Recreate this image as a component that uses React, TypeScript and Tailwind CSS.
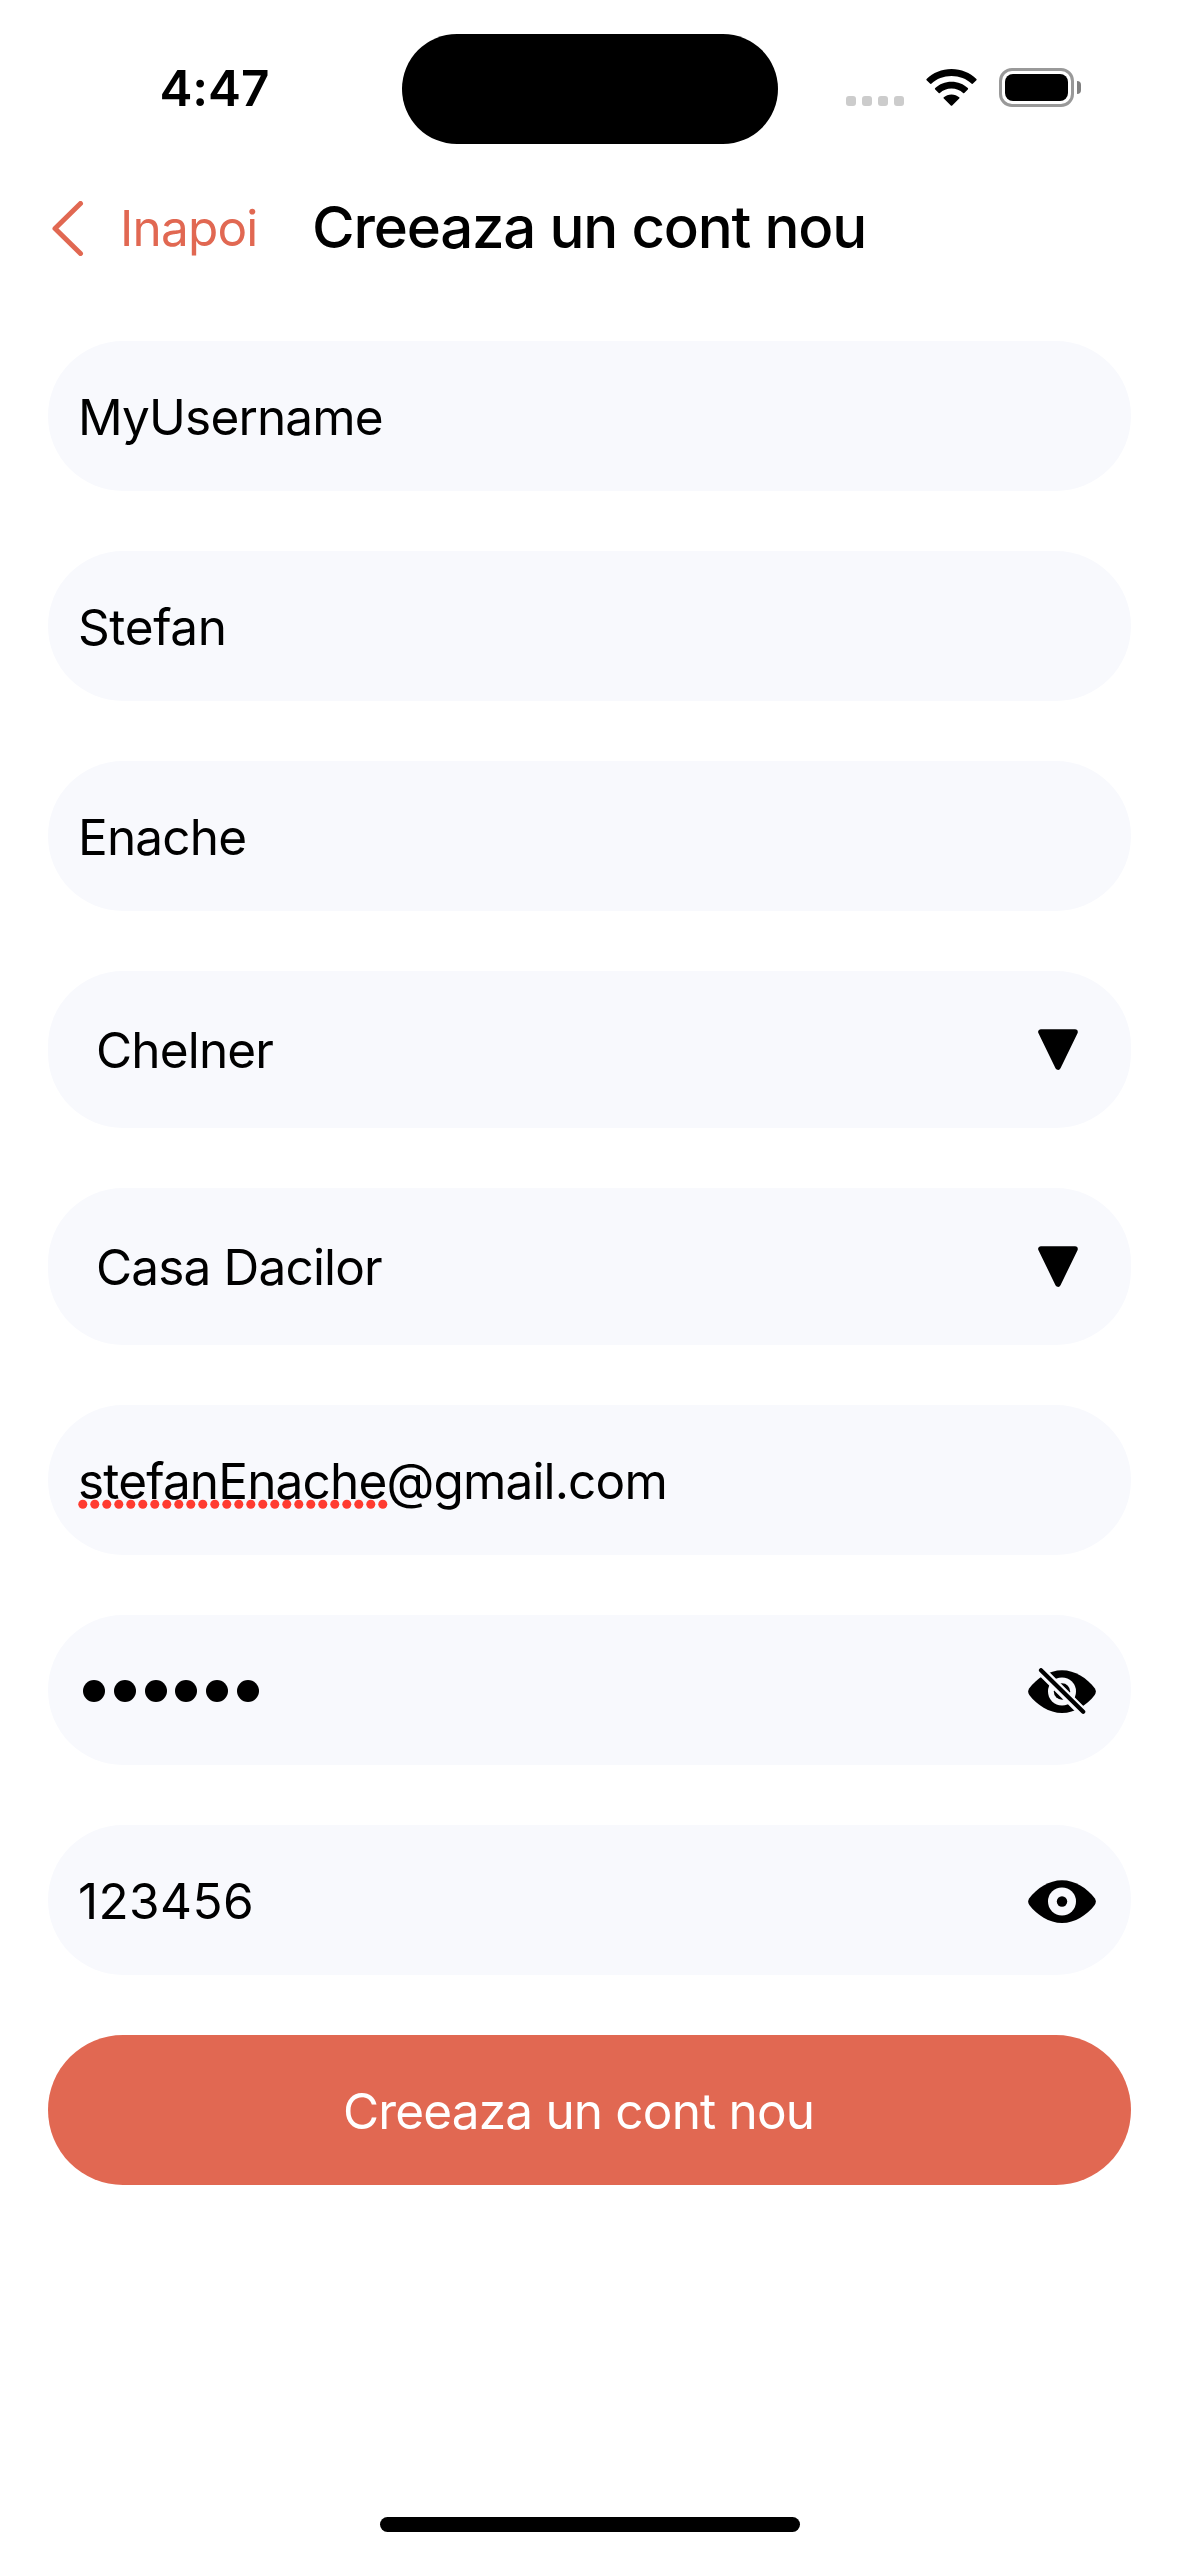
import type { ReactNode } from "react";

const EYE =
  "M1.3 18.2C9 8 21 .2 34 .2S59 8 66.7 18.2Q69 21.6 66.7 25C59 35 47 43 34 43S9 35 1.3 25Q-1 21.6 1.3 18.2Z";

function EyeIcon() {
  return (
    <svg className="relative top-px h-[43px] w-[68px]" viewBox="0 0 68 43" fill="none">
      <path d={EYE} fill="#000" />
      <circle cx="34" cy="21.5" r="14" fill="#f8f9fd" />
      <circle cx="34" cy="21.5" r="5.2" fill="#000" />
    </svg>
  );
}

function EyeOffIcon() {
  return (
    <svg className="relative top-px h-[47px] w-[68px]" viewBox="0 -2 68 47" fill="none" strokeLinecap="round">
      <path d={EYE} fill="#000" />
      <circle cx="34" cy="21.5" r="14" fill="#f8f9fd" />
      <circle cx="34" cy="21.5" r="8.2" fill="#000" />
      <path d="M9 -3.5L59 46.5" stroke="#f8f9fd" strokeWidth="9.6" />
      <path d="M13 .2L55.2 41.8" stroke="#000" strokeWidth="4.2" />
    </svg>
  );
}

function Triangle() {
  return (
    <svg className="h-[41px] w-[40px]" viewBox="0 0 40 41">
      <path d="M3 3H37L20 38Z" stroke="#000" strokeWidth="5.6" strokeLinejoin="round" />
    </svg>
  );
}

function Field({ children, icon }: { children: ReactNode; icon?: ReactNode }) {
  return (
    <div className="flex h-[150px] items-center justify-between rounded-[75px] bg-[#f8f9fd] pr-[35px] pl-[30px]">
      <div className="pt-[2px]">{children}</div>
      {icon}
    </div>
  );
}

function Select({ children }: { children: ReactNode }) {
  return (
    <div className="flex h-[157px] items-center justify-between rounded-[75px] bg-[#f8f9fd] pr-[53px] pl-[48px]">
      <div className="pt-px">{children}</div>
      <Triangle />
    </div>
  );
}

function StatusBar() {
  return (
    <div className="flex h-[178px] items-start">
      <div className="w-[402px] pt-[58px] pl-[159.5px] font-semibold tracking-[-0.1px]">4:47</div>
      <div className="mt-[34px] h-[110px] w-[375.5px] rounded-[55px] bg-black" />
      <div className="mt-[68px] ml-[68.5px] flex h-[39px] items-center">
        <div className="mt-[27px] flex gap-[6px]">
          {[0, 1, 2, 3].map((i) => (
            <div key={i} className="size-[10px] rounded-[3px] bg-[#cccccc]" />
          ))}
        </div>
        <svg className="ml-[22px] h-[37px] w-[51px]" viewBox="0 0 51 37">
          <path d="M25.5 0C35.3 0 44 3.8 50.4 9.9Q51 10.5 50.4 11.2L47 14.6Q46.4 15.3 45.7 14.7C40.4 9.8 33.3 7 25.5 7S10.6 9.8 5.3 14.7Q4.6 15.3 4 14.6L.6 11.2Q0 10.5 .6 9.9C7 3.8 15.7 0 25.5 0Z" />
          <path d="M25.5 12.7C31.9 12.7 37.6 15.1 41.8 19.1Q42.5 19.7 41.8 20.4L38.3 23.9Q37.7 24.4 37.1 23.9C34 21.2 30 19.6 25.5 19.6S17 21.2 13.9 23.9Q13.3 24.4 12.7 23.9L9.2 20.4Q8.5 19.7 9.2 19.1C13.4 15.1 19.1 12.7 25.5 12.7Z" />
          <path d="M25.5 25.4C28.5 25.4 31.2 26.5 33.2 28.3Q33.8 28.9 33.2 29.5L26.2 36.5Q25.5 37.2 24.8 36.5L17.8 29.5Q17.2 28.9 17.8 28.3C19.8 26.5 22.5 25.4 25.5 25.4Z" />
        </svg>
        <div className="ml-[22px] flex h-[39px] w-[75px] items-center justify-center rounded-[13px] border-[3px] border-[#999999]">
          <div className="h-[27px] w-[63px] rounded-[8px] bg-black" />
        </div>
        <div className="ml-[3px] h-[13px] w-[4px] rounded-r-full bg-[#808080]" />
      </div>
    </div>
  );
}

function NavBar() {
  return (
    <div className="flex h-[100px] items-center text-[#e16852]">
      <svg className="ml-[52px] h-[55px] w-[32px]" viewBox="0 0 32 55" fill="none">
        <path
          d="M28.5 2.5L3 27.5L28.5 52.5"
          stroke="currentColor"
          strokeWidth="5"
          strokeLinecap="round"
          strokeLinejoin="round"
        />
      </svg>
      <div className="w-[192.5px] pl-[36px] tracking-[-0.8px]">Inapoi</div>
      <h1 className="-mt-[2px] ml-[35.5px] text-[58.2px] leading-[70px] font-medium tracking-[-1.2px] whitespace-nowrap text-black">
        Creeaza un cont nou
      </h1>
    </div>
  );
}

export default function App() {
  return (
    <div className="flex h-[2556px] w-[1179px] flex-col overflow-hidden bg-white font-['Inter','Roboto',sans-serif] text-[49.5px] leading-[60px] tracking-[-0.84px] text-black">
      <StatusBar />
      <NavBar />
      <div className="mt-[63px] flex flex-col gap-[60px] px-[48px]">
        <Field>MyUsername</Field>
        <Field>
          <span className="tracking-[-0.4px]">Stefan</span>
        </Field>
        <Field>Enache</Field>
        <Select>Chelner</Select>
        <Select>Casa Dacilor</Select>
        <Field>
          <span className="relative">
            stefanEnache
            {/* spelling marker under the flagged word */}
            <svg className="absolute top-[48px] left-0 h-[10px] w-[312px]" viewBox="0 0 312 10">
              {Array.from({ length: 26 }, (_, i) => (
                <circle key={i} cx={4.8 + i * 12} cy="5.2" r="4.5" fill="#ff3b30" />
              ))}
            </svg>
          </span>
          @gmail.com
        </Field>
        <Field icon={<EyeOffIcon />}>
          <div className="flex gap-[8.8px] pl-[5px]">
            {[0, 1, 2, 3, 4, 5].map((i) => (
              <div key={i} className="size-[22px] rounded-full bg-black" />
            ))}
          </div>
        </Field>
        <Field icon={<EyeIcon />}>
          <span className="tracking-[0.4px]">123456</span>
        </Field>
        <button className="flex h-[150px] items-center rounded-[75px] bg-[#e16852] pt-[2px] pl-[295px] tracking-[-0.83px] text-white">
          Creeaza un cont nou
        </button>
      </div>
      <div className="mt-auto mb-[24px] h-[15px] w-[420px] self-center rounded-full bg-black" />
    </div>
  );
}
